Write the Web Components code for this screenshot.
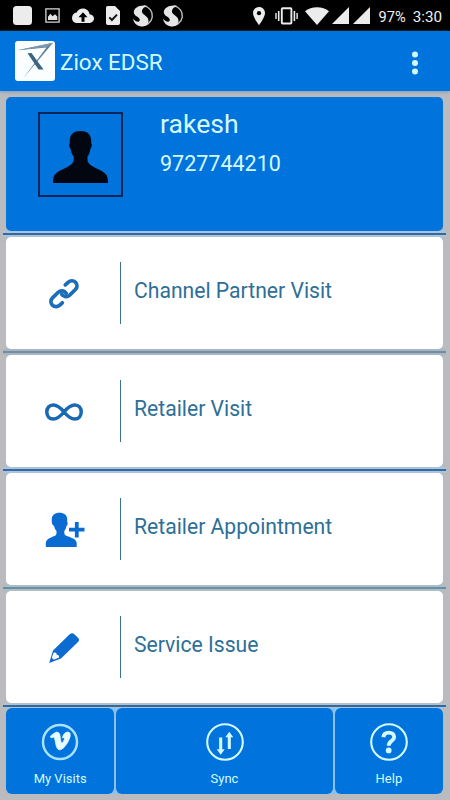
<!DOCTYPE html>
<html lang="en">
<head>
<meta charset="utf-8">
<title>Ziox EDSR</title>
<style>
    html, body { margin: 0; height: 100%; }
    body { background: #b9bbbe; font-family: Roboto, "Liberation Sans", sans-serif; overflow: hidden; }
</style>
</head>
<body>
<zx-app>
    <zx-status-bar slot="top" battery="97%" time="3:30"></zx-status-bar>
    <zx-app-bar slot="top">Ziox EDSR</zx-app-bar>
    <zx-profile><span slot="name">rakesh</span><span slot="phone">9727744210</span></zx-profile>
    <zx-divider></zx-divider>
    <zx-menu-item icon="link">Channel Partner Visit</zx-menu-item>
    <zx-divider style="--line: #6f8da6; --glow: #aab5c0"></zx-divider>
    <zx-menu-item icon="infinity">Retailer Visit</zx-menu-item>
    <zx-divider></zx-divider>
    <zx-menu-item icon="person-add">Retailer Appointment</zx-menu-item>
    <zx-divider style="--line: #5f94a8; --glow: #b0bcc2"></zx-divider>
    <zx-menu-item icon="pencil">Service Issue</zx-menu-item>
    <zx-divider style="--line: #2b6ca6; height: 5px; --glow: #b4c0ca"></zx-divider>
    <zx-footer>
        <zx-tile icon="vimeo">My Visits</zx-tile>
        <zx-tile icon="sync">Sync</zx-tile>
        <zx-tile icon="help">Help</zx-tile>
    </zx-footer>
</zx-app>

<script>
// every entry is [width, height, markup]
const swirl = `
    <path d="M12 .9A9.700 9.700 0 1 1 9 20.400" fill="none" stroke="#bdbdbd" stroke-width="1.400"/>
    <path d="M15.500 1C8.500-.8 2 2.500 1.800 7c-.1 4.200 5 4.600 5.800 7 .5 1.700-.3 2.800-1.600 2.800-1.900 0-3.900-1.600-5-3.400.8 4.700 4 7.800 8.700 8 4.400.2 6.800-2.400 6.800-5.600 0-4.700-6-6-6.500-8.800C9.600 4.300 12 2 15.500 1z" fill="#e6e6e6"/>
    <path d="M1.500 8.500c.5 2.500 2.500 3.300 4 4.500" fill="none" stroke="#000" stroke-width="1"/>`;

const icons = {
    square: [19, 19, `<rect width="19" height="19" rx="3.500" fill="#ececec"/>`],
    image: [15, 15, `<path d="M.9.9h13.200v13.200H.9z" fill="none" stroke="#d8d8d8" stroke-width="1.300"/><path d="M3 12V8.800l2.500-3 2 2.400 2.500-2 2.300 2.400V12z" fill="#e6e6e6"/>`],
    cloud: [22, 16, `<path d="M17.600 6.300C17 2.700 14.300.5 11 .5 8.200.5 5.800 2 4.600 4.600 1.900 5 0 7.200 0 9.900 0 12.900 2.400 15 5.300 15h11.500c2.900 0 5.200-1.900 5.200-4.500 0-2.300-2-4.100-4.400-4.200z" fill="#ececec"/><path d="M11 4.200l4.500 5h-3v4.500h-3V9.200h-3z" fill="#000"/>`],
    doc: [14, 19, `<path d="M1.800 0H9l5 5v12.200A1.800 1.800 0 0 1 12.200 19H1.800A1.800 1.800 0 0 1 0 17.200V1.800A1.800 1.800 0 0 1 1.800 0z" fill="#ececec"/><path d="M3.300 11.300l2.600 2.700L11 8.600" fill="none" stroke="#111" stroke-width="1.900"/>`],
    swirl: [22, 22, swirl],
    pin: [12, 18, `<path d="M6 0C2.600 0 0 2.700 0 6c0 4.500 6 12 6 12s6-7.500 6-12c0-3.300-2.600-6-6-6z" fill="#ececec"/><circle cx="6" cy="6.200" r="2.100" fill="#000"/>`],
    vibrate: [23, 18, `<rect x="6.800" y="1.300" width="9.600" height="15.200" rx=".8" fill="none" stroke="#ececec" stroke-width="1.900"/><path d="M3.700 4v10M19.400 4v10" stroke="#ececec" stroke-width="1.600"/><path d="M1 6v6M22.100 6v6" stroke="#ececec" stroke-width="1.400"/>`],
    wifi: [24, 18, `<path d="M0 4.300C3.300 1.700 7.400.3 12 .3s8.700 1.400 12 4L12 18z" fill="#ececec"/>`],
    signal: [17, 17, `<path d="M17 0v17H0z" fill="#ececec"/>`],
    logo: [40, 40, `<rect width="40" height="40" rx="3" fill="#fafeff"/>
        <path d="M2.500 9.300L38 1.800 8 37.500 31.500 6.500z" fill="#5d7f9c"/><path d="M2.500 9.300L38 1.800 32 5.800z" fill="#7c9bb2"/>
        <path d="M12.500 12.200l4-.2L28.500 28.600l-5-.1z" fill="#3d6482"/>`],
    dots: [8, 24, `<g fill="#d3fbff"><circle cx="4" cy="3.500" r="3"/><circle cx="4" cy="12" r="3"/><circle cx="4" cy="20.500" r="3"/></g>`],
    avatar: [85, 85, `<rect x="1" y="1" width="83" height="83" fill="none" stroke="#05204c" stroke-width="1.800"/>
        <path d="M42.500 19c6.500 0 10.700 3.300 10.700 9.500v3c1 .6.700 4-.8 5.500-.6 3.800-1.600 5.800-2.900 7.500v3.500c0 2.500 2.200 4.500 5 6.300 4 2.500 8.700 4 12 6.700 2.900 2.300 3.500 5 3.500 10H15c0-5 .6-7.700 3.500-10 3.300-2.700 8-4.200 12-6.700 2.800-1.800 5.200-3.800 5.200-6.300v-3.500c-1.300-1.700-2.500-3.700-3.100-7.500-1.500-1.500-1.800-4.900-.8-5.500v-3c0-6.200 4.200-9.500 10.700-9.500z" fill="#020611"/>`],
    link: [32, 32, `<g fill="none" stroke="#1b6dba" stroke-width="3.700" stroke-linecap="round">
        <path d="M17.300 6.900l2.800-2.600c2.200-2.100 5.400-2.100 7.400 0s2 5-.1 7.200l-5.700 5.600c-2.600 2.300-6.200 1.900-8-.9"/>
        <path d="M14.300 24.800l-2.500 2.300c-2.200 2.100-5.400 2.100-7.400 0s-2-5 .1-7.200l5.700-5.600c2.600-2.300 6.200-1.900 8 .9"/></g>`],
    infinity: [40, 20, `<path d="M20 10C16.500 5.800 13.500 3 9.300 3 5.200 3 2.800 6 2.800 10s2.400 7 6.500 7c4.200 0 7.200-2.800 10.700-7s6.500-7 10.700-7c4.100 0 6.500 3 6.500 7s-2.400 7-6.500 7c-4.200 0-7.200-2.800-10.700-7z" fill="none" stroke="#1768b5" stroke-width="3.500"/>`],
    "person-add": [40, 36, `<path d="M15.500.8c4.700 0 7.700 2.500 7.700 6.500V10c.9.600.6 3-.8 4.300-.3 2-1.100 3.500-2.100 4.600v2c0 2 1.500 2.700 4.200 3.700 5 1.900 8.200 3.300 8.200 7V35H1.800v-3.400c0-3.700 3-5.100 7.200-7 2.500-1.100 3.500-1.700 3.500-3.700v-2c-1.100-1.100-2-2.600-2.300-4.600C8.500 13 7.500 10.600 7.800 10V7.300C7.800 3.300 10.800.8 15.500.8z" fill="#0a6cd3"/>
        <path d="M32.800 10v15.500M25 17.600h15.500" stroke="#0a6cd3" stroke-width="3.800"/>`],
    pencil: [32, 32, `<path d="M21.700 2.300c1.600-1.500 3.200-1.500 4.700 0l3.600 3.500c1.400 1.400 1.400 2.900 0 4.300L13 26.500 1.200 31 5 18.500z" fill="#0c6bd0"/>
        <path d="M5.600 20.800c2-.6 3.200.3 3 2.100 1.800-.2 2.700.8 2.500 2.500l-5.200 2.300-2.100-2z" fill="#fff"/>`],
    vimeo: [38, 38, `<circle cx="19" cy="19" r="17" fill="none" stroke="#a9e2ff" stroke-width="2.500"/>
        <path d="M9 13.600c2.500-2.200 5-4.400 6.700-4.500 2-.1 3 1.300 3.400 3.700.5 3 .9 7.200 1.700 7.200.7 0 2.500-2.900 2.600-4.100.1-1.400-.9-1.500-2.100-1 1-3.900 3-6 5.600-5.900 2 .1 2.500 1.500 2.400 3.400-.3 4.900-6.500 14.500-10.600 14.500-4.400 0-4-9.900-5.600-12.400-.5-.7-1.500 0-2.600.6z" fill="#e8fbff" stroke="#e8fbff" stroke-width=".6"/>`],
    sync: [38, 38, `<circle cx="19" cy="19" r="17.800" fill="none" stroke="#d3fbff" stroke-width="2.100"/>
        <path d="M14.700 14.500v14M23.300 11v15" stroke="#d3fbff" stroke-width="3.100"/><path d="M10.700 26.200h8l-4 5.600zM19.300 14.300h8l-4-5.600z" fill="#d3fbff"/>`],
    help: [38, 38, `<circle cx="19" cy="19" r="17.800" fill="none" stroke="#d3fbff" stroke-width="2.100"/>
        <path d="M13.400 14.200c.3-3 2.400-4.600 5.400-4.600 3.100 0 5.400 1.700 5.400 4.500 0 3.800-5.500 3.800-5.500 8.700" fill="none" stroke="#d3fbff" stroke-width="3.900"/><circle cx="18.700" cy="27.400" r="2.900" fill="#d3fbff"/>`]
};

class ZxIcon extends HTMLElement {
    connectedCallback() {
        const [width, height, markup] = icons[this.getAttribute("name")];
        this.attachShadow({ mode: "open" }).innerHTML = `
            <style>
                :host { display: block; flex: none; }
                svg { display: block; overflow: visible; }
            </style>
            <svg width="${width}" height="${height}" viewBox="0 0 ${width} ${height}">${markup}</svg>`;
    }
}

class ZxApp extends HTMLElement {
    connectedCallback() {
        this.attachShadow({ mode: "open" }).innerHTML = `
            <style>
                :host { display: flex; flex-direction: column; width: 450px; height: 800px; }
                main { display: flex; flex-direction: column; padding: 6px 4px 6px 3px; }
            </style>
            <slot name="top"></slot>
            <main><slot></slot></main>`;
    }
}

class ZxStatusBar extends HTMLElement {
    connectedCallback() {
        this.attachShadow({ mode: "open" }).innerHTML = `
            <style>
                :host { display: flex; align-items: center; justify-content: space-between; box-sizing: border-box; height: 31px; padding: 0 8px 0 13px; background: #000; color: #f1f1f1; font-size: 15.2px; }
                div { display: flex; align-items: center; }
                .battery { margin-left: 9px; font-size: 14.6px; }
                .time { margin-left: 7px; }
                span { padding-top: 2px; white-space: nowrap; }
            </style>
            <div>
                <zx-icon name="square"></zx-icon>
                <zx-icon name="image" style="margin-left: 13px"></zx-icon>
                <zx-icon name="cloud" style="margin-left: 12px"></zx-icon>
                <zx-icon name="doc" style="margin-left: 12px"></zx-icon>
                <zx-icon name="swirl" style="margin-left: 12px"></zx-icon>
                <zx-icon name="swirl" style="margin-left: 8px"></zx-icon>
            </div>
            <div>
                <zx-icon name="pin"></zx-icon>
                <zx-icon name="vibrate" style="margin-left: 10px"></zx-icon>
                <zx-icon name="wifi" style="margin-left: 7px"></zx-icon>
                <zx-icon name="signal" style="margin-left: 3px"></zx-icon>
                <zx-icon name="signal" style="margin-left: 4px"></zx-icon>
                <span class="battery">${this.getAttribute("battery")}</span>
                <span class="time">${this.getAttribute("time")}</span>
            </div>`;
    }
}

class ZxAppBar extends HTMLElement {
    connectedCallback() {
        this.attachShadow({ mode: "open" }).innerHTML = `
            <style>
                :host { display: flex; align-items: center; box-sizing: border-box; height: 60px; padding: 0 31px 0 15px; background: #0073dc; color: #d3fbff; font-size: 22.4px; box-shadow: 0 1px 3px #7a9dc0; }
                .title { flex: 1; margin-left: 5px; padding-top: 2px; }
                zx-icon[name=dots] { padding-top: 3px; }
            </style>
            <zx-icon name="logo"></zx-icon>
            <div class="title"><slot></slot></div>
            <zx-icon name="dots"></zx-icon>`;
    }
}

class ZxProfile extends HTMLElement {
    connectedCallback() {
        this.attachShadow({ mode: "open" }).innerHTML = `
            <style>
                :host { display: flex; box-sizing: border-box; height: 134px; margin: 0 3px; padding: 15px 32px; border-radius: 5px; background: #0073dc; color: #d3fbff; }
                .text { margin-left: 37px; }
                .name { margin-top: -4px; font-size: 26.6px; line-height: 32px; }
                .phone { margin-top: 11px; font-size: 21.5px; line-height: 26px; }
            </style>
            <zx-icon name="avatar"></zx-icon>
            <div class="text">
                <div class="name"><slot name="name"></slot></div>
                <div class="phone"><slot name="phone"></slot></div>
            </div>`;
    }
}

class ZxDivider extends HTMLElement {
    connectedCallback() {
        this.attachShadow({ mode: "open" }).innerHTML = `
            <style>
                :host { display: flex; align-items: center; height: 6px; background: var(--glow, #a9c4e0); }
                hr { flex: 1; height: 2px; margin: 0; border: 0; background: var(--line, #36699c); }
            </style>
            <hr>`;
    }
}

class ZxMenuItem extends HTMLElement {
    connectedCallback() {
        this.attachShadow({ mode: "open" }).innerHTML = `
            <style>
                :host { display: flex; align-items: center; height: 112px; margin: 0 3px; border-radius: 5px; background: #fff; color: #2e6f97; font-size: 21.15px; }
                .icon { display: flex; justify-content: center; width: 114px; padding: 2px 0 0 1px; box-sizing: border-box; }
                .rule { width: 1px; height: 62px; background: #3c718f; }
                .label { margin: 0 0 5px 13px; white-space: nowrap; }
            </style>
            <div class="icon"><zx-icon name="${this.getAttribute("icon")}"></zx-icon></div>
            <div class="rule"></div>
            <div class="label"><slot></slot></div>`;
    }
}

class ZxFooter extends HTMLElement {
    connectedCallback() {
        this.attachShadow({ mode: "open" }).innerHTML = `
            <style>
                :host { display: grid; grid-template-columns: 1fr 2fr 1fr; gap: 2px; height: 86px; margin: 0 3px; background: #8fc0ec; border-radius: 6px; }
            </style>
            <slot></slot>`;
    }
}

class ZxTile extends HTMLElement {
    connectedCallback() {
        this.attachShadow({ mode: "open" }).innerHTML = `
            <style>
                :host { display: flex; flex-direction: column; align-items: center; border-radius: 6px; background: #0073dc; color: #d3fbff; font-size: 13px; }
                zx-icon { margin-top: 15px; }
                .label { margin-top: 10px; line-height: 16px; }
            </style>
            <zx-icon name="${this.getAttribute("icon")}"></zx-icon>
            <div class="label"><slot></slot></div>`;
    }
}

customElements.define("zx-icon", ZxIcon);
customElements.define("zx-app", ZxApp);
customElements.define("zx-status-bar", ZxStatusBar);
customElements.define("zx-app-bar", ZxAppBar);
customElements.define("zx-profile", ZxProfile);
customElements.define("zx-divider", ZxDivider);
customElements.define("zx-menu-item", ZxMenuItem);
customElements.define("zx-footer", ZxFooter);
customElements.define("zx-tile", ZxTile);
</script>
</body>
</html>
